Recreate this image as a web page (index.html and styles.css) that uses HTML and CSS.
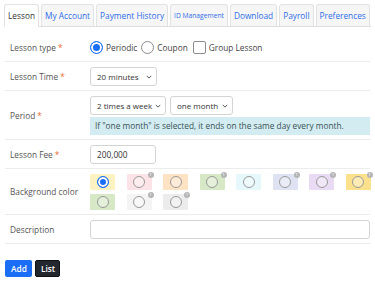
FILE: index.html
```html
<!DOCTYPE html>
<html lang="en">
<head>
    <meta charset="UTF-8">
    <meta name="viewport" content="width=device-width, initial-scale=1.0">
    <title>Lesson</title>
    <link rel="stylesheet" href="styles.css">
</head>
<body>
    <div class="page">
        <!-- Tabs -->
        <ul class="tabs">
            <li class="tab active">Lesson</li>
            <li class="tab">My Account</li>
            <li class="tab">Payment History</li>
            <li class="tab tab-small">ID Management</li>
            <li class="tab">Download</li>
            <li class="tab">Payroll</li>
            <li class="tab">Preferences</li>
        </ul>

        <form class="lesson-form">
            <div class="form-row">
                <div class="form-label">Lesson type<span class="req">*</span></div>
                <div class="form-field inline">
                    <label class="opt"><input type="radio" name="type" class="radio" checked> Periodic</label>
                    <label class="opt"><input type="radio" name="type" class="radio"> Coupon</label>
                    <label class="opt opt-check"><input type="checkbox" class="check"> Group Lesson</label>
                </div>
            </div>

            <div class="form-row">
                <div class="form-label">Lesson Time<span class="req">*</span></div>
                <div class="form-field">
                    <span class="select-wrap sel-time">
                        <select class="select"><option>20 minutes</option></select>
                        <svg class="chev" viewBox="0 0 8 5"><path d="M1 1l3 3 3-3" fill="none" stroke="#444" stroke-width="1.2"/></svg>
                    </span>
                </div>
            </div>

            <div class="form-row">
                <div class="form-label">Period<span class="req">*</span></div>
                <div class="form-field">
                    <div class="inline selects">
                        <span class="select-wrap sel-times">
                            <select class="select"><option>2 times a week</option></select>
                            <svg class="chev" viewBox="0 0 8 5"><path d="M1 1l3 3 3-3" fill="none" stroke="#444" stroke-width="1.2"/></svg>
                        </span>
                        <span class="select-wrap sel-month">
                            <select class="select"><option>one month</option></select>
                            <svg class="chev" viewBox="0 0 8 5"><path d="M1 1l3 3 3-3" fill="none" stroke="#444" stroke-width="1.2"/></svg>
                        </span>
                    </div>
                    <div class="info">If "one month" is selected, it ends on the same day every month.</div>
                </div>
            </div>

            <div class="form-row">
                <div class="form-label">Lesson Fee<span class="req">*</span></div>
                <div class="form-field">
                    <input type="text" class="text-input fee" value="200,000">
                </div>
            </div>

            <div class="form-row">
                <div class="form-label">Background color</div>
                <div class="form-field">
                    <div class="swatches">
                        <label class="swatch c1"><input type="radio" name="bg" class="radio" checked></label>
                        <label class="swatch c2"><input type="radio" name="bg" class="radio"><span class="badge">!</span></label>
                        <label class="swatch c3"><input type="radio" name="bg" class="radio"></label>
                        <label class="swatch c4"><input type="radio" name="bg" class="radio"><span class="badge">!</span></label>
                        <label class="swatch c5"><input type="radio" name="bg" class="radio"></label>
                        <label class="swatch c6"><input type="radio" name="bg" class="radio"><span class="badge">!</span></label>
                        <label class="swatch c7"><input type="radio" name="bg" class="radio"><span class="badge">!</span></label>
                        <label class="swatch c8"><input type="radio" name="bg" class="radio"><span class="badge">!</span></label>
                        <label class="swatch c9"><input type="radio" name="bg" class="radio"></label>
                        <label class="swatch c10"><input type="radio" name="bg" class="radio"><span class="badge">!</span></label>
                        <label class="swatch c11"><input type="radio" name="bg" class="radio"><span class="badge">!</span></label>
                    </div>
                </div>
            </div>

            <div class="form-row">
                <div class="form-label">Description</div>
                <div class="form-field">
                    <input type="text" class="text-input desc">
                </div>
            </div>

            <div class="actions">
                <button type="button" class="btn btn-add">Add</button>
                <button type="button" class="btn btn-list">List</button>
            </div>
        </form>
    </div>
</body>
</html>
```

FILE: styles.css
```css
/* Global styles */
body {
    margin: 0;
    font-family: "Open Sans", "Noto Sans", sans-serif;
    font-size: 8.3px;
    color: #444;
    background: #fff;
}

.page {
    padding: 4px 4px 0 4px;
}

/* Tabs */
.tabs {
    display: flex;
    gap: 2px;
    list-style: none;
    margin: 0;
    padding: 0;
    border-bottom: 1px solid #dedede;
}

.tab {
    height: 21px;
    line-height: 21px;
    padding: 0 3px;
    margin-bottom: -1px;
    border: 1px solid #e2e2e2;
    border-bottom-color: #dedede;
    border-radius: 3px 3px 0 0;
    background: #f6f6f6;
    color: #2f6de6;
    white-space: nowrap;
}

.tab.active {
    background: #fff;
    color: #333;
    border-bottom-color: #fff;
}

.tab-small {
    font-size: 6.7px;
}

/* Form rows */
.lesson-form {
    margin: 6px 1px 0 1px;
}

.form-row {
    display: grid;
    grid-template-columns: 75px 1fr;
    border-bottom: 1px solid #ececec;
}

.form-label {
    display: flex;
    align-items: center;
    padding-left: 5px;
    color: #555;
}

.req {
    color: #ee6b2f;
    margin-left: 2px;
}

.form-field {
    padding: 5px 0 4px 10px;
    min-height: 19px;
}

.inline {
    display: flex;
    align-items: center;
}

.opt {
    display: flex;
    align-items: center;
    gap: 3px;
    margin-right: 4px;
    color: #444;
}

.opt-check {
    margin-left: 1px;
}

/* Radios and checkbox */
.radio {
    appearance: none;
    width: 13px;
    height: 13px;
    margin: 0;
    border: 1px solid #8c8c8c;
    border-radius: 50%;
    background: #fff;
}

.radio:checked {
    border-color: #1a6ef5;
    background: #1a6ef5;
    box-shadow: inset 0 0 0 2px #fff;
}

.check {
    appearance: none;
    width: 13px;
    height: 13px;
    margin: 0;
    border: 1px solid #8c8c8c;
    border-radius: 2px;
    background: #fff;
}

/* Selects and inputs */
.select-wrap {
    position: relative;
    display: inline-block;
    height: 19px;
}

.select {
    appearance: none;
    width: 100%;
    height: 19px;
    font-family: inherit;
    font-size: 8px;
    color: #333;
    border: 1px solid #d4d4d4;
    border-radius: 3px;
    background: #fff;
    padding: 0 9px 0 6px;
    margin: 0;
}

.chev {
    position: absolute;
    right: 5px;
    top: 8px;
    width: 6px;
    height: 4px;
    pointer-events: none;
}

.sel-time {
    width: 67px;
}

.selects {
    gap: 4px;
}

.sel-times {
    width: 76px;
}

.sel-month {
    width: 63px;
}

.info {
    margin-top: 2px;
    padding: 3px 5px;
    height: 12px;
    line-height: 12px;
    background: #d3ecf1;
    color: #3a5257;
}

.text-input {
    box-sizing: border-box;
    height: 19px;
    font-family: inherit;
    font-size: 8.3px;
    color: #333;
    border: 1px solid #d4d4d4;
    border-radius: 3px;
    padding: 0 6px;
}

.fee {
    width: 66px;
}

.desc {
    width: 100%;
    display: block;
}

/* Colour swatches */
.swatches {
    display: grid;
    grid-template-columns: repeat(8, 25px);
    column-gap: 11.5px;
    row-gap: 4px;
}

.swatch {
    position: relative;
    height: 16px;
    display: flex;
    align-items: center;
    justify-content: center;
    border-radius: 1px;
}

.swatch .radio {
    width: 12px;
    height: 12px;
    border-color: #9a9a9a;
    background: rgba(255, 255, 255, 0.35);
}

.swatch .radio:checked {
    border-color: #1a6ef5;
    background: #1a6ef5;
}

.badge {
    position: absolute;
    top: -2px;
    right: -2px;
    width: 6px;
    height: 6px;
    border-radius: 50%;
    background: #b5b5b5;
    color: #fff;
    font-size: 4px;
    font-weight: bold;
    line-height: 6px;
    text-align: center;
}

.c1 { background: #fdf3c2; }
.c2 { background: #fce3e7; }
.c3 { background: #fde2c3; }
.c4 { background: #d6e8c5; }
.c5 { background: #e7f8fd; }
.c6 { background: #dfe2f3; }
.c7 { background: #e9dbf3; }
.c8 { background: #fbe18c; }
.c9 { background: #d6e8c5; }
.c10 { background: #f4f4f4; }
.c11 { background: #ececec; }

/* Buttons */
.actions {
    display: flex;
    gap: 3px;
    margin-top: 16px;
}

.btn {
    height: 17px;
    padding: 0 5px;
    font-family: inherit;
    font-size: 8.3px;
    font-weight: 600;
    color: #fff;
    border: 1px solid transparent;
    border-radius: 2px;
    cursor: pointer;
}

.btn-add {
    background: #1a6ef5;
    width: 27px;
}

.btn-list {
    background: #23282e;
    border-color: #111;
    width: 25px;
}
```
